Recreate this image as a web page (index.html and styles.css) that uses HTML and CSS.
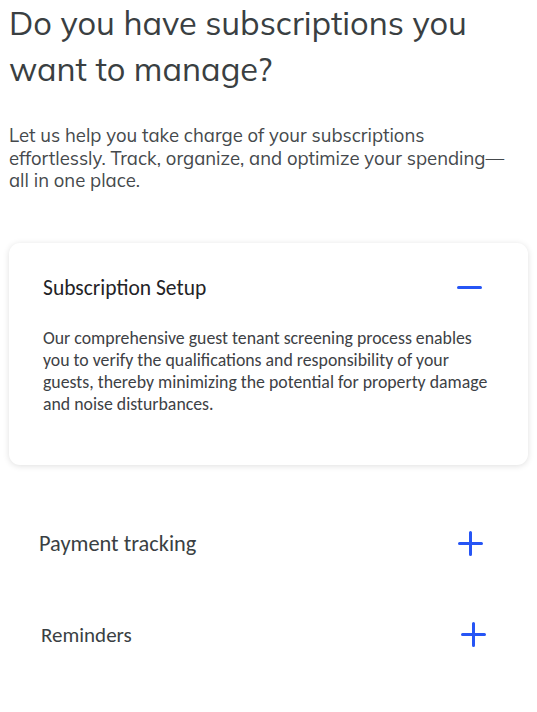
FILE: index.html
```html
<!DOCTYPE html>
<html>
<head>
<meta charset="utf-8">
<link rel="stylesheet" href="styles.css">
</head>
<body>
<main class="page">
  <h1 class="title">Do you have subscriptions you want to manage?</h1>
  <p class="intro">Let us help you take charge of your subscriptions effortlessly. Track, organize, and optimize your spending—all in one place.</p>
  <section class="card">
    <div class="row">
      <h2 class="item-title">Subscription Setup</h2>
      <svg class="icon" width="25" height="25" viewBox="0 0 25 25"><line x1="1.5" y1="12.5" x2="23.5" y2="12.5" stroke="#2655f5" stroke-width="3" stroke-linecap="round"/></svg>
    </div>
    <p class="card-body">Our comprehensive guest tenant screening process enables you to verify the qualifications and responsibility of your guests, thereby minimizing the potential for property damage and noise disturbances.</p>
  </section>
  <div class="item item-pay">
    <h2 class="item-title muted pay">Payment tracking</h2>
    <svg class="icon" width="25" height="25" viewBox="0 0 25 25"><path d="M1.5 12.5H23.5M12.5 1.5V23.5" stroke="#2655f5" stroke-width="3" stroke-linecap="round"/></svg>
  </div>
  <div class="item item-rem">
    <h2 class="item-title muted rem">Reminders</h2>
    <svg class="icon" width="25" height="25" viewBox="0 0 25 25"><path d="M1.5 12.5H23.5M12.5 1.5V23.5" stroke="#2655f5" stroke-width="3" stroke-linecap="round"/></svg>
  </div>
</main>
</body>
</html>
```
FILE: styles.css
```css
* { box-sizing: border-box; }
html, body { margin: 0; padding: 0; background: #fff; }
body { font-family: Carlito, Lato, sans-serif; color: #3a3f43; }
.page { padding: 0 9px; }
.title {
  margin: 0;
  font-family: Mulish, "Open Sans", sans-serif;
  font-weight: 400;
  font-size: 32.6px;
  line-height: 46px;
  color: #3a3f42;
}
.intro {
  margin: 32px 0 0;
  max-width: 500px;
  font-family: Mulish, "Open Sans", sans-serif;
  font-size: 18.5px;
  line-height: 22.5px;
  color: #45494c;
}
.card {
  margin-top: 51px;
  width: 519px;
  height: 222px;
  background: #fff;
  border-radius: 11px;
  box-shadow: 0 1px 6px rgba(0,0,0,0.13);
  padding: 31px 38px 0 34px;
}
.row { display: flex; justify-content: space-between; align-items: center; padding-right: 8px; }
.item-title {
  margin: 0;
  font-weight: 400;
  font-size: 21.5px;
  line-height: 28px;
  color: #1f2326;
}
.item-title.muted { color: #3a3f43; }
.item-title.pay { font-size: 22.4px; }
.item-title.rem { font-size: 21px; }
.card-body {
  margin: 25px 0 0;
  font-size: 17.8px;
  line-height: 22px;
  color: #3d4145;
}
.icon { display: block; }
.item {
  display: flex;
  justify-content: space-between;
  align-items: center;
}
.item-pay { margin-top: 65px; padding: 0 45px 0 30px; }
.item-rem { margin-top: 63px; padding: 0 42px 0 32px; }
```
